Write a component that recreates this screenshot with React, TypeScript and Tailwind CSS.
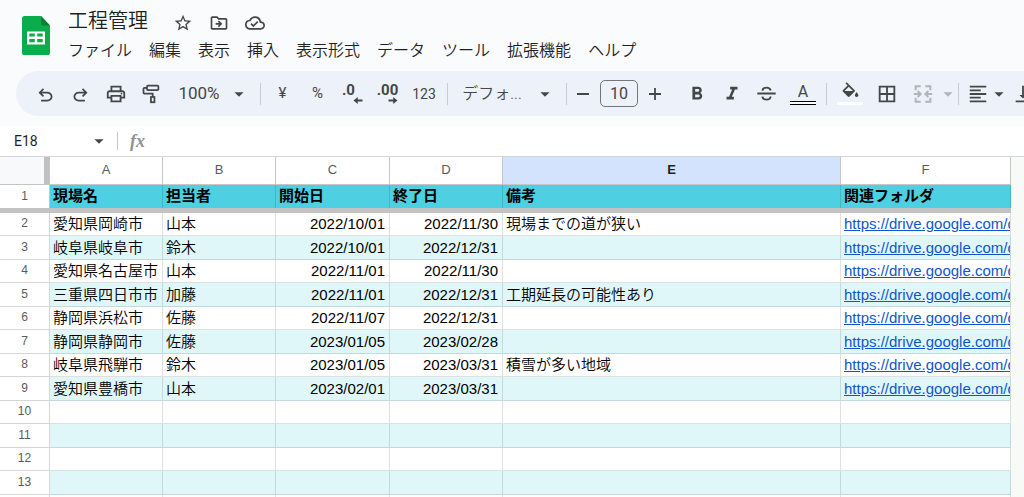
import React from 'react';
import {
  MdArrowDropDown,
  MdBorderAll,
  MdFormatAlignLeft,
  MdFormatBold,
  MdFormatItalic,
  MdOutlineCloudDone,
  MdOutlineDriveFileMove,
  MdOutlinePrint,
  MdOutlineStarBorder,
  MdVerticalAlignBottom
} from 'react-icons/md';
import { clsx } from 'clsx';

interface SiteRow {
  site: string;
  owner: string;
  start: string;
  end: string;
  note?: string;
}

const MENUS = ['ファイル', '編集', '表示', '挿入', '表示形式', 'データ', 'ツール', '拡張機能', 'ヘルプ'];

const COLUMNS = ['A', 'B', 'C', 'D', 'E', 'F'];

const HEADINGS = ['現場名', '担当者', '開始日', '終了日', '備考', '関連フォルダ'];

const FOLDER_URL = 'https://drive.google.com/drive/folders';

const ROWS: SiteRow[] = [
  { site: '愛知県岡崎市', owner: '山本', start: '2022/10/01', end: '2022/11/30', note: '現場までの道が狭い' },
  { site: '岐阜県岐阜市', owner: '鈴木', start: '2022/10/01', end: '2022/12/31' },
  { site: '愛知県名古屋市', owner: '山本', start: '2022/11/01', end: '2022/11/30' },
  { site: '三重県四日市市', owner: '加藤', start: '2022/11/01', end: '2022/12/31', note: '工期延長の可能性あり' },
  { site: '静岡県浜松市', owner: '佐藤', start: '2022/11/07', end: '2022/12/31' },
  { site: '静岡県静岡市', owner: '佐藤', start: '2023/01/05', end: '2023/02/28' },
  { site: '岐阜県飛騨市', owner: '鈴木', start: '2023/01/05', end: '2023/03/31', note: '積雪が多い地域' },
  { site: '愛知県豊橋市', owner: '山本', start: '2023/02/01', end: '2023/03/31' }
];

const LAST_ROW = 14;

const SheetsLogo = () => (
  <svg width="28" height="39" viewBox="0 0 28 39" aria-hidden="true">
    <path d="M2.6 0H19l9 9.5v26.9a2.6 2.6 0 0 1-2.6 2.6H2.6A2.6 2.6 0 0 1 0 36.4V2.6A2.6 2.6 0 0 1 2.6 0z" fill="#0bac4b" />
    <path d="M19 0l9 9.5h-6.5A2.5 2.5 0 0 1 19 7z" fill="#068232" />
    <path
      d="M5 15.500h18v13H5zM7.300 17.500v3h5.500v-3zM15.200 17.500v3h5.500v-3zM7.300 23v3.200h5.500V23zM15.200 23v3.200h5.500V23z"
      fill="#fff"
      fillRule="evenodd"
    />
  </svg>
);

const UndoIcon = ({ className = '' }: { className?: string }) => (
  <svg width="21" height="21" viewBox="0 0 24 24" fill="currentColor" className={className} aria-hidden="true">
    <path d="M7 21v-2h7.100q1.575 0 2.738-1T18 15.500 16.838 13 14.100 12H7.800l2.600 2.600L9 16l-5-5 5-5 1.400 1.400L7.800 10h6.300q2.425 0 4.163 1.575T20 15.500t-1.737 3.925T14.100 21z" />
  </svg>
);

const PaintRollerIcon = () => (
  <svg width="21" height="21" viewBox="0 0 24 24" fill="none" stroke="currentColor" strokeWidth="2" aria-hidden="true">
    <rect x="8" y="3" width="13" height="5" rx="1" />
    <path d="M8 5.500H5a1 1 0 0 0-1 1V11a1 1 0 0 0 1 1h9.500v4" />
    <rect x="12.500" y="16" width="4" height="6" />
  </svg>
);

const StrikeIcon = () => (
  <svg width="21" height="21" viewBox="0 0 24 24" fill="none" stroke="currentColor" strokeWidth="2.200" aria-hidden="true">
    <path d="M1.500 12h21" />
    <path d="M16.800 8.500C16.300 6.500 14.500 5.300 12 5.300S7.600 6.600 7.300 8.800M7.200 15.500c.4 2.200 2.300 3.500 4.800 3.500s4.500-1.200 4.700-3.600" />
  </svg>
);

const MergeIcon = () => (
  <svg width="22" height="22" viewBox="0 0 24 24" fill="none" stroke="currentColor" strokeWidth="2.200" aria-hidden="true">
    <path d="M9.500 3.500H4V8M4 16v4.500h5.500M14.500 3.500H20V8M20 16v4.500h-5.500" />
    <path d="M2 12h7M6.200 8.800L9.400 12l-3.200 3.200M22 12h-7M17.800 8.800L14.600 12l3.200 3.200" />
  </svg>
);

const FillIcon = () => (
  <svg width="21" height="16" viewBox="0 0 24 18" fill="currentColor" aria-hidden="true">
    <path d="M16.560 8.940L7.620 0 6.210 1.410l2.380 2.380-5.150 5.150c-.59.59-.59 1.540 0 2.120l5.500 5.500c.29.29.68.44 1.060.44s.77-.15 1.060-.44l5.500-5.500c.59-.58.59-1.530 0-2.120zM5.210 10L10 5.210 14.790 10H5.210zM19 11.500s-2 2.170-2 3.500c0 1.100.9 2 2 2s2-.9 2-2c0-1.330-2-3.500-2-3.500z" />
  </svg>
);

// Digits on top, small arrow at the lower right
const DecimalIcon = ({ digits, increase = false }: { digits: string; increase?: boolean }) => (
  <span className="flex flex-col items-end">
    <span className="text-[15px] leading-[14px] font-bold">{digits}</span>
    <svg
      width="10"
      height="7"
      viewBox="0 0 10 7"
      fill="currentColor"
      className={clsx(increase ? 'rotate-180' : '-mr-2')}
      aria-hidden="true"
    >
      <path d="M.5 3.500L4.800 0v2.600h4.700v1.800H4.800V7z" />
    </svg>
  </span>
);

interface ToolButtonProps {
  label: string;
  className?: string;
  children: React.ReactNode;
}

const ToolButton: React.FC<ToolButtonProps> = ({ label, className = 'w-[35px]', children }) => (
  <button
    type="button"
    aria-label={label}
    className={clsx('flex h-[30px] shrink-0 items-center justify-center', className)}
  >
    {children}
  </button>
);

const Divider = () => <span className="mx-1 h-[22px] w-px shrink-0 bg-[#c7cacf]" />;

const Toolbar = () => (
  <div className="ml-4 flex h-[45px] items-center overflow-hidden rounded-l-full bg-[#edf1fa] pl-3 text-[#444746]">
    <ToolButton label="元に戻す"><UndoIcon /></ToolButton>
    <ToolButton label="やり直し"><UndoIcon className="-scale-x-100" /></ToolButton>
    <ToolButton label="印刷"><MdOutlinePrint size={22} /></ToolButton>
    <ToolButton label="書式を貼り付け"><PaintRollerIcon /></ToolButton>
    <ToolButton label="ズーム" className="w-[88px] gap-2 pl-1">
      <span className="text-[17px]">100%</span>
      <MdArrowDropDown size={22} />
    </ToolButton>
    <Divider />
    <ToolButton label="通貨の表示形式"><span className="text-[15px]">¥</span></ToolButton>
    <ToolButton label="パーセント表示"><span className="text-[15px]">%</span></ToolButton>
    <ToolButton label="小数点以下の桁数を減らす" className="w-[35px] pr-2"><DecimalIcon digits=".0" /></ToolButton>
    <ToolButton label="小数点以下の桁数を増やす"><DecimalIcon digits=".00" increase /></ToolButton>
    <ToolButton label="表示形式の詳細設定" className="w-[38px]">
      <span className="text-sm">123</span>
    </ToolButton>
    <Divider />
    <ToolButton label="フォント" className="w-[110px] gap-3 pl-1">
      <span className="text-base font-[350]">デフォ...</span>
      <MdArrowDropDown size={22} />
    </ToolButton>
    <Divider />
    <div className="flex shrink-0 items-center gap-[5px]">
      <ToolButton label="フォントサイズを縮小" className="w-6">
        <svg width="12" height="12" viewBox="0 0 12 12" aria-hidden="true">
          <path d="M0 6h12" stroke="currentColor" strokeWidth="1.800" />
        </svg>
      </ToolButton>
      <input
        aria-label="フォントサイズ"
        defaultValue="10"
        className="h-[27px] w-[38px] rounded-[5px] border border-[#747775] text-center text-base"
      />
      <ToolButton label="フォントサイズを拡大" className="w-6">
        <svg width="12" height="12" viewBox="0 0 12 12" aria-hidden="true">
          <path d="M0 6h12M6 0v12" stroke="currentColor" strokeWidth="1.800" />
        </svg>
      </ToolButton>
    </div>
    <ToolButton label="太字" className="ml-3 w-[35px]"><MdFormatBold size={22} /></ToolButton>
    <ToolButton label="斜体"><MdFormatItalic size={22} /></ToolButton>
    <ToolButton label="取り消し線"><StrikeIcon /></ToolButton>
    <ToolButton label="テキストの色" className="w-[38px] flex-col">
      <span className="text-base leading-[18px]">A</span>
      <span className="h-1 w-[26px] border-y border-black bg-white" />
    </ToolButton>
    <Divider />
    <ToolButton label="塗りつぶしの色" className="w-[38px] flex-col gap-1">
      <FillIcon />
      <span className="h-[3px] w-[26px] bg-white" />
    </ToolButton>
    <ToolButton label="枠線"><MdBorderAll size={22} /></ToolButton>
    <ToolButton label="セルを結合" className="w-[38px] text-[#b1b4b9]"><MergeIcon /></ToolButton>
    <ToolButton label="結合の種類" className="w-3 text-[#b1b4b9]">
      <MdArrowDropDown size={22} className="shrink-0" />
    </ToolButton>
    <Divider />
    <ToolButton label="水平方向の配置" className="w-[30px]"><MdFormatAlignLeft size={22} /></ToolButton>
    <ToolButton label="配置の種類" className="w-3">
      <MdArrowDropDown size={22} className="shrink-0" />
    </ToolButton>
    <ToolButton label="垂直方向の配置"><MdVerticalAlignBottom size={22} /></ToolButton>
  </div>
);

const Header = () => (
  <header className="bg-[#f9fbfd] pb-[10px]">
    <div className="flex h-[71px] gap-[18px] pl-[22px]">
      <div className="pt-4">
        <SheetsLogo />
      </div>
      <div className="pt-[7px]">
        <div className="flex h-7 items-center text-[#444746]">
          <h1 className="text-xl font-[350] text-[#1f1f1f]">工程管理</h1>
          <div className="ml-[25px] flex gap-4 pt-[3px]">
            <button type="button" aria-label="スター"><MdOutlineStarBorder size={20} /></button>
            <button type="button" aria-label="移動"><MdOutlineDriveFileMove size={20} /></button>
            <button type="button" aria-label="ドキュメントのステータス"><MdOutlineCloudDone size={20} /></button>
          </div>
        </div>
        <nav className="flex h-8 items-center gap-[17px] text-base font-[350] text-[#1f1f1f]">
          {MENUS.map(menu => (
            <button key={menu} type="button" className="whitespace-nowrap">{menu}</button>
          ))}
        </nav>
      </div>
    </div>
    <Toolbar />
  </header>
);

const FormulaBar = () => (
  <div className="flex h-[31px] items-center border-b border-[#d5d7da]">
    <input
      aria-label="名前ボックス"
      defaultValue="E18"
      className="w-[88px] pl-[14px] text-sm text-[#1f1f1f]"
    />
    <button type="button" aria-label="名前付き範囲" className="text-[#444746]">
      <MdArrowDropDown size={22} />
    </button>
    <span className="ml-[7px] h-[18px] w-px bg-[#c7c7c7]" />
    <label
      htmlFor="formula"
      className="w-10 pl-3 font-['Liberation_Serif',serif] text-lg font-bold text-[#8f9194] italic"
    >
      fx
    </label>
    <input id="formula" className="min-w-0 flex-1" />
  </div>
);

const cell = 'overflow-hidden border-r border-b border-black/12 p-0 pr-1 pl-[3px] font-[350] whitespace-nowrap';

const Grid = () => (
  <div className="flex min-h-0 flex-1 bg-[#f8faf8]">
    <table className="h-max w-full table-fixed border-separate border-spacing-0 bg-white text-[15px] leading-5 text-black">
      <colgroup>
        <col className="w-[50px]" />
        <col className="w-[113px]" />
        <col className="w-[113px]" />
        <col className="w-[114px]" />
        <col className="w-[113px]" />
        <col />
        <col className="w-[170px]" />
      </colgroup>
      <thead>
        <tr className="h-7 text-[13px] text-[#575b5f]">
          <td className="border-r border-b border-[#c4c4c4] bg-[#f8f9fa] p-0">
            <div className="ml-auto h-[27px] w-[5px] bg-[#c0c0c0]" />
          </td>
          {COLUMNS.map(column => (
            <th
              key={column}
              scope="col"
              className={clsx(
                'border-r border-b border-[#c4c7c5] p-0 pb-[2px]',
                column === 'E' ? 'bg-[#d3e3fd] font-bold text-[#1f1f1f]' : 'font-normal'
              )}
            >
              {column}
            </th>
          ))}
        </tr>
      </thead>
      <tbody>
        <tr className="h-[23px]">
          <th scope="row" className="border-r border-[#c4c7c5] p-0 pb-[2px] text-xs font-normal text-[#575b5f]">1</th>
          {HEADINGS.map(heading => (
            <th
              key={heading}
              className="overflow-hidden border-r border-black/12 bg-[#4dd0e1] p-0 pb-[2px] pl-[3px] text-left font-bold whitespace-nowrap"
            >
              {heading}
            </th>
          ))}
        </tr>
        {/* Frozen row bar */}
        <tr className="h-[5px]">
          <td colSpan={7} className="bg-[#c3c3c3] p-0" />
        </tr>
        {Array.from({ length: LAST_ROW - 1 }, (_, i) => {
          const row = ROWS[i];
          const banded = i % 2 === 1;
          return (
            <tr key={i} className={banded ? 'h-6' : 'h-[23px]'}>
              <th
                scope="row"
                className="border-r border-b border-[#d5d7d6] p-0 pb-[2px] text-xs font-normal text-[#575b5f]"
              >
                {i + 2}
              </th>
              <td className={clsx(cell, banded && 'bg-[#e0f7fa]')}>{row?.site}</td>
              <td className={clsx(cell, banded && 'bg-[#e0f7fa]')}>{row?.owner}</td>
              <td className={clsx(cell, 'text-right', banded && 'bg-[#e0f7fa]')}>{row?.start}</td>
              <td className={clsx(cell, 'text-right', banded && 'bg-[#e0f7fa]')}>{row?.end}</td>
              <td className={clsx(cell, banded && 'bg-[#e0f7fa]')}>{row?.note}</td>
              <td className={clsx(cell, banded && 'bg-[#e0f7fa]')}>
                {row && (
                  <a href={FOLDER_URL} className="text-[#1155cc] underline">{FOLDER_URL}</a>
                )}
              </td>
            </tr>
          );
        })}
      </tbody>
    </table>
    <div className="w-[13px] shrink-0" />
  </div>
);

const App: React.FC = () => (
  <div className="flex h-screen flex-col overflow-hidden bg-white font-['Liberation_Sans','Noto_Sans_CJK_JP',sans-serif]">
    <div className="font-['Roboto','Noto_Sans_CJK_JP',sans-serif]">
      <Header />
      <FormulaBar />
    </div>
    <Grid />
  </div>
);

export default App;
